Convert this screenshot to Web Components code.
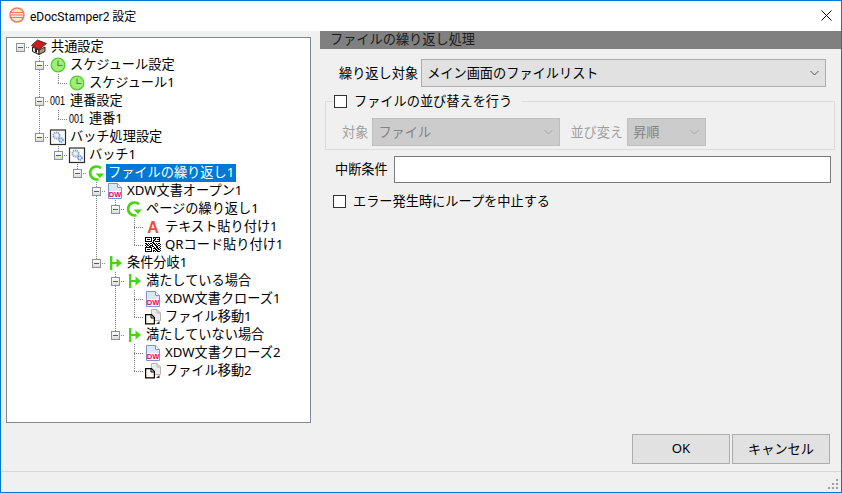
<!DOCTYPE html>
<html lang="ja">
<head>
<meta charset="utf-8">
<title>eDocStamper2 設定</title>
<style>
  html, body { margin: 0; padding: 0; background: #f0f0f0; }
  body { font: 13.2px "Noto Sans", "Noto Sans CJK JP", sans-serif; }
</style>
</head>
<body>
<settings-dialog></settings-dialog>

<script>
const UI_FONT = '"Noto Sans", "Noto Sans CJK JP", sans-serif';

// tree icons, all drawn in a 16x16 box
const qrCells = [
  '1111111011111110', '1000001010100010', '1011101001101110', '1000001011000010',
  '1111111010111110', '0000000110000000', '1101011011010110', '0110100101101001',
  '1011011100110110', '0100110110011001', '1111111001011010', '1000001011101101',
  '1011101000110110', '1000001011011001', '1111111010101110', '0000000000000000'
];
const qrRects = qrCells.map((row, y) => [...row].map((c, x) =>
  c === '1' ? `<rect x="${x}" y="${y}" width="1" height="1"/>` : '').join('')).join('');

const ICONS = {
  house: `<path d="M1.500 8 8 11v4.500L1.500 12.500z" fill="#f3e3c4" stroke="#222"/><path d="M8 11l6-3v4.500l-6 3z" fill="#b9946a" stroke="#222"/><path d="M.5 6.500 6.500 1 15.500 4.500 8 10.500z" fill="#c81e1e" stroke="#5a1010" stroke-width=".8"/><rect x="4" y="10" width="2" height="3.500" fill="#222"/>`,
  clock: `<circle cx="8" cy="8" r="6.800" fill="#a5ea7c" stroke="#49d324" stroke-width="1.300"/><path d="M8 3.500V8.500H12.500" fill="none" stroke="#2c9c22" stroke-width="1.100"/>`,
  counter: `<text x="0" y="12" font-family="Liberation Sans, sans-serif" font-size="12.500" textLength="15" lengthAdjust="spacingAndGlyphs" fill="#000">001</text>`,
  gears: `<rect x=".5" y="1" width="15" height="14.500" fill="#fbfbfb" stroke="#2b2b2b" stroke-width="1.200"/><circle cx="6.500" cy="6.500" r="3.200" fill="#dfe6ee" stroke="#8fa3bb" stroke-width="1.700" stroke-dasharray="1.300 .7"/><circle cx="6.500" cy="6.500" r="1" fill="#fff"/><circle cx="11" cy="11" r="2.100" fill="#d5e6f7" stroke="#3f7fd0" stroke-width="1.300" stroke-dasharray="1.200 .6"/>`,
  loop: `<path d="M13 3.200A6.500 6.500 0 1 0 10.500 14.200" fill="none" stroke="#46d60f" stroke-width="2.600"/><path d="M7.500 8.500 16 8.500 12 13z" fill="#46d60f"/>`,
  doc: `<path d="M1.500.5H10.500L14.500 4.500V15.500H1.500z" fill="#dbe6f6" stroke="#7d94c6"/><path d="M10.500.5V4.500H14.500" fill="#fff" stroke="#7d94c6"/><rect x="2" y="8" width="12" height="7" fill="#fff"/><text x="8" y="14" text-anchor="middle" font-family="Liberation Sans, sans-serif" font-weight="700" font-size="7.500" fill="#f0004c">DW</text>`,
  text: `<text x="8" y="14" text-anchor="middle" font-family="Liberation Sans, sans-serif" font-weight="700" font-size="16" fill="#ef4d3c">A</text>`,
  qr: `<g fill="#000">${qrRects}</g>`,
  branch: `<rect x="3" y="1" width="2.400" height="14" fill="#46d60f"/><rect x="5" y="7" width="5" height="2" fill="#46d60f"/><path d="M9.500 3.500 15 8 9.500 12.500z" fill="#46d60f"/>`,
  move: `<path d="M6.500 .5H12L15.500 4V11.500H6.500z" fill="#ededed" stroke="#b4b4b4"/><path d="M12 .5V4H15.500" fill="none" stroke="#b4b4b4"/><path d="M.6 5.600H6.500L9.400 8.500V14.900H.6z" fill="#fdf8ea" stroke="#000" stroke-width="1.200"/><path d="M6 5.600V9H9.400" fill="none" stroke="#000"/><path d="M11 15h3.500v-3z" fill="#333"/>`
};

// prefix cells: space none, | line, T tee, L elbow, B root box, t tee+box, l elbow+box
const TREE = [
  ['B', 'house', '共通設定'],
  [' t', 'clock', 'スケジュール設定'],
  [' |L', 'clock', 'スケジュール1'],
  [' t', 'counter', '連番設定'],
  [' |L', 'counter', '連番1'],
  [' l', 'gears', 'バッチ処理設定'],
  ['  l', 'gears', 'バッチ1'],
  ['   l', 'loop', 'ファイルの繰り返し1', true],
  ['    t', 'doc', 'XDW文書オープン1'],
  ['    |l', 'loop', 'ページの繰り返し1'],
  ['    | T', 'text', 'テキスト貼り付け1'],
  ['    | L', 'qr', 'QRコード貼り付け1'],
  ['    l', 'branch', '条件分岐1'],
  ['     t', 'branch', '満たしている場合'],
  ['     |T', 'doc', 'XDW文書クローズ1'],
  ['     |L', 'move', 'ファイル移動1'],
  ['     l', 'branch', '満たしていない場合'],
  ['      T', 'doc', 'XDW文書クローズ2'],
  ['      L', 'move', 'ファイル移動2']
];

class TitleBar extends HTMLElement {
  connectedCallback() {
    this.attachShadow({mode: 'open'}).innerHTML = `
      <style>
        :host { display: flex; align-items: center; box-sizing: border-box; height: 30px; padding-bottom: 2px;
                background: #fff; color: #000; font: 12px Roboto, "Noto Sans CJK JP", sans-serif; }
        .logo { margin: 0 5px 0 8px; flex: none; }
        .title { flex: 1; }
        .close { width: 30px; display: flex; align-items: center; justify-content: center; }
      </style>
      <svg class="logo" width="16" height="16" viewBox="0 0 16 16">
        <circle cx="8" cy="8" r="7" fill="#fbe3da" stroke="#ee7a62" stroke-width="1.500"/>
        <path d="M2 5.500h12M1.500 8h13M2 10.500h12" stroke="#ee7a62" stroke-width="1.200"/>
      </svg>
      <span class="title"><slot></slot></span>
      <span class="close">
        <svg width="11" height="11" viewBox="0 0 11 11"><path d="M.5 .5 10.500 10.500M10.500 .5 .5 10.500" stroke="#000" fill="none"/></svg>
      </span>`;
  }
}

class TreeRow extends HTMLElement {
  connectedCallback() {
    const prefix = this.getAttribute('prefix');
    const cells = [...prefix].map(c => `<span class="cell c${'|TLBtl'.indexOf(c)}">${'Btl'.includes(c) ? '<i class="box"></i>' : ''}</span>`).join('');
    const selected = this.hasAttribute('selected');
    this.attachShadow({mode: 'open'}).innerHTML = `
      <style>
        :host { display: flex; height: 18px; align-items: center; white-space: nowrap; color: #000; }
        .cell { flex: none; width: 19px; height: 18px; display: flex; align-items: center; justify-content: center;
                background-repeat: no-repeat; }
        /* dotted connectors, v = vertical through the middle, h = right half */
        .c0, .c1, .c4 { background-image: repeating-linear-gradient(to bottom, #808080 0 1px, transparent 1px 2px); background-size: 1px 100%; background-position: 9px 0; }
        .c2, .c5 { background-image: repeating-linear-gradient(to bottom, #808080 0 1px, transparent 1px 2px); background-size: 1px 9px; background-position: 9px 0; }
        .c1, .c2, .c4, .c5, .c3 { position: relative; }
        .c1::after, .c2::after, .c3::after, .c4::after, .c5::after {
          content: ""; position: absolute; left: 9px; right: 0; top: 9px; height: 1px;
          background: repeating-linear-gradient(to right, #808080 0 1px, transparent 1px 2px); }
        .box { position: relative; z-index: 1; box-sizing: border-box; width: 9px; height: 9px; border: 1px solid #919191;
               background: linear-gradient(#fff, #dcdcdc); display: flex; align-items: center; justify-content: center; }
        .box::before { content: ""; width: 5px; height: 1px; background: #3a5fb5; }
        svg { flex: none; margin-left: 1px; overflow: visible; }
        .label { margin-left: 2px; padding: 0 2px; box-sizing: border-box; height: 18px; line-height: 16px; font-size: 13.2px; }
        .sel { background: #0078d7; color: #fff; }
      </style>
      ${cells}
      <svg width="16" height="16" viewBox="0 0 16 16">${ICONS[this.getAttribute('icon')]}</svg>
      <span class="label ${selected ? 'sel' : ''}"><slot></slot></span>`;
  }
}

class TreeView extends HTMLElement {
  connectedCallback() {
    this.attachShadow({mode: 'open'}).innerHTML = `
      <style>
        :host { display: block; box-sizing: border-box; width: 305px; height: 386px; padding-left: 4px;
                background: #fff; border: 1px solid #828790; overflow: hidden; }
      </style>
      <slot></slot>`;
    for (const [prefix, icon, label, selected] of TREE) {
      const row = document.createElement('tree-row');
      row.setAttribute('prefix', prefix);
      row.setAttribute('icon', icon);
      if (selected) row.setAttribute('selected', '');
      row.textContent = label;
      this.appendChild(row);
    }
  }
}

class ComboBox extends HTMLElement {
  connectedCallback() {
    this.attachShadow({mode: 'open'}).innerHTML = `
      <style>
        :host { display: flex; align-items: center; box-sizing: border-box; height: 28px; padding: 0 6px 0 5px;
                background: #e1e1e1; border: 1px solid #adadad; color: #000; white-space: nowrap; }
        :host([disabled]) { background: #cccccc; border-color: #bfbfbf; color: #838383; }
        span { flex: 1; padding-bottom: 2px; }
        svg { flex: none; stroke: #555; }
        :host([disabled]) svg { stroke: #a8a8a8; }
      </style>
      <span><slot></slot></span>
      <svg width="9" height="6" viewBox="0 0 9 6"><path d="M.5 1 4.500 5 8.500 1" fill="none"/></svg>`;
  }
}

class CheckBox extends HTMLElement {
  connectedCallback() {
    this.attachShadow({mode: 'open'}).innerHTML = `
      <style>
        :host { display: inline-flex; align-items: center; gap: 7px; white-space: nowrap; color: #000; }
        i { box-sizing: border-box; width: 13px; height: 13px; background: #fff; border: 1px solid #333; flex: none; }
        span { padding-bottom: 2px; }
      </style>
      <i></i><span><slot></slot></span>`;
  }
}

class PushButton extends HTMLElement {
  connectedCallback() {
    this.attachShadow({mode: 'open'}).innerHTML = `
      <style>
        :host { display: flex; align-items: center; justify-content: center; box-sizing: border-box;
                width: 98px; height: 30px; padding-bottom: 2px; background: #e1e1e1; border: 1px solid #adadad; color: #000; }
      </style>
      <slot></slot>`;
  }
}

class LoopSettings extends HTMLElement {
  connectedCallback() {
    this.attachShadow({mode: 'open'}).innerHTML = `
      <style>
        :host { display: flex; flex-direction: column; flex: 1; min-width: 0; color: #000; }
        header { height: 18px; line-height: 17px; padding-left: 10px; background: #808080; color: #1c1c1c; }
        .row { display: flex; align-items: center; }
        .row > span { padding-bottom: 2px; }
        .target { margin: 10px 15px 0 19px; gap: 3px; }
        .target combo-box { flex: 1; }
        fieldset { margin: 5px 6px 0 5px; padding: 0 0 3px 16px; border: 1px solid #dcdcdc; min-width: 0; }
        legend { margin-left: -9px; padding: 0 9px 0 1px; display: flex; height: 18px; }
        .sort { gap: 4px; margin-top: 8px; color: #a0a0a0; }
        .sort .sep { margin-left: 6px; }
        .abort { margin: 6px 10px 0 15px; gap: 6px; }
        .abort i { flex: 1; box-sizing: border-box; height: 27px; background: #fff; border: 1px solid #7a7a7a; }
        .stop { margin: 8px 0 0 13px; }
        footer { margin-top: auto; display: flex; justify-content: flex-end; gap: 2px; padding: 0 11px 7px 0; }
      </style>
      <header>ファイルの繰り返し処理</header>
      <div class="row target"><span>繰り返し対象</span><combo-box>メイン画面のファイルリスト</combo-box></div>
      <fieldset>
        <legend><check-box>ファイルの並び替えを行う</check-box></legend>
        <div class="row sort">
          <span>対象</span><combo-box disabled style="width:188px">ファイル</combo-box>
          <span class="sep">並び変え</span><combo-box disabled style="width:79px">昇順</combo-box>
        </div>
      </fieldset>
      <div class="row abort"><span>中断条件</span><i></i></div>
      <div class="row stop"><check-box>エラー発生時にループを中止する</check-box></div>
      <footer><push-button>OK</push-button><push-button>キャンセル</push-button></footer>`;
  }
}

class StatusGrip extends HTMLElement {
  connectedCallback() {
    this.attachShadow({mode: 'open'}).innerHTML = `
      <style>
        :host { display: flex; justify-content: flex-end; align-items: flex-end; box-sizing: border-box; height: 21px;
                border-top: 1px solid #d7d7d7; padding: 0 2px 2px 0; }
      </style>
      <svg width="11" height="11" viewBox="0 0 11 11" fill="#a0a0a0">
        <rect x="8" y="0" width="2" height="2"/><rect x="4" y="4" width="2" height="2"/><rect x="8" y="4" width="2" height="2"/>
        <rect x="0" y="8" width="2" height="2"/><rect x="4" y="8" width="2" height="2"/><rect x="8" y="8" width="2" height="2"/>
      </svg>`;
  }
}

class SettingsDialog extends HTMLElement {
  connectedCallback() {
    this.attachShadow({mode: 'open'}).innerHTML = `
      <style>
        :host { display: flex; flex-direction: column; box-sizing: border-box; width: 842px; height: 493px;
                background: #f0f0f0; border: 1px solid #0078d7; font: 13.2px ${UI_FONT}; }
        main { flex: 1; display: flex; gap: 9px; padding-left: 5px; min-height: 0; }
        tree-view { margin-top: 6px; }
      </style>
      <title-bar>eDocStamper2 設定</title-bar>
      <main><tree-view></tree-view><loop-settings></loop-settings></main>
      <status-grip></status-grip>`;
  }
}

customElements.define('title-bar', TitleBar);
customElements.define('tree-row', TreeRow);
customElements.define('tree-view', TreeView);
customElements.define('combo-box', ComboBox);
customElements.define('check-box', CheckBox);
customElements.define('push-button', PushButton);
customElements.define('loop-settings', LoopSettings);
customElements.define('status-grip', StatusGrip);
customElements.define('settings-dialog', SettingsDialog);
</script>
</body>
</html>
